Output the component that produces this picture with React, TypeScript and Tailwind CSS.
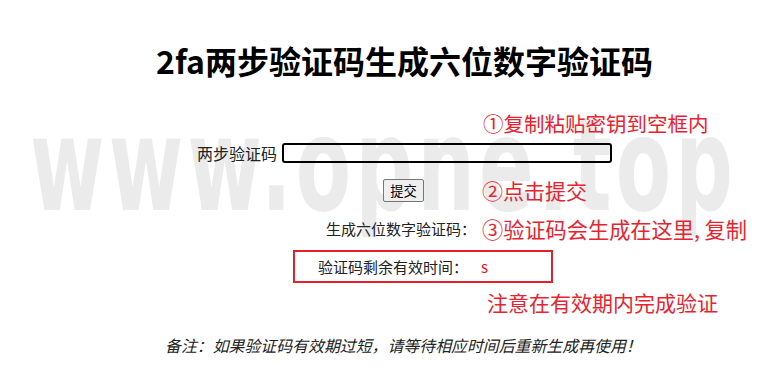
import React from 'react';

const cjk = "font-['Noto_Sans_CJK_SC','Noto_Sans',sans-serif]";

// watermark glyphs are squeezed sideways, then spread out to fill the width
const squeeze = 0.62;

function Watermark() {
  return (
    <svg
      className="pointer-events-none absolute inset-0"
      width="761"
      height="384"
      viewBox="0 0 761 384"
    >
      <text
        x={30 / squeeze}
        y="210"
        transform={`scale(${squeeze} 1)`}
        textLength={703 / squeeze}
        lengthAdjust="spacing"
        fill="#ebebeb"
        fontFamily="'DejaVu Sans', sans-serif"
        fontWeight="bold"
        fontSize="130"
      >
        www.opne.top
      </text>
    </svg>
  );
}

export default function App() {
  return (
    <div className={`relative h-[384px] w-[761px] overflow-hidden bg-white text-[#222] ${cjk}`}>
      <Watermark />
      <div className="relative flex flex-col">
        <h1 className="mt-[40px] h-[40px] pl-[48px] text-center text-[32px] font-bold leading-[40px] text-black">
          2fa两步验证码生成六位数字验证码
        </h1>

        <div className="mt-[29px] h-[28px] pl-[483px] text-[20.5px] leading-[28px] text-[#e8232f]">
          ①复制粘贴密钥到空框内
        </div>

        <div className="mt-[6px] flex h-[20px] items-center pl-[197px]">
          <label className="w-[85px] text-[16px] leading-[20px]">两步验证码</label>
          <input
            type="text"
            className="h-[20px] w-[330px] rounded-[3px] border-2 border-black bg-transparent outline-none"
          />
        </div>

        <div className="mt-[15px] flex h-[24px] items-center pl-[383px]">
          <button className="h-[23px] w-[41px] rounded-[2px] border border-[#767676] bg-[#efefef] text-[13.33px] leading-[19px] text-black">
            提交
          </button>
          <span className="ml-[58px] text-[21px] leading-[28px] text-[#e8232f]">②点击提交</span>
        </div>

        <div className="mt-[13px] flex h-[28px] items-center">
          <span className="w-[476px] text-right text-[15px] leading-[28px]">生成六位数字验证码：</span>
          <span className="ml-[6px] text-[21.2px] leading-[28px] text-[#e8232f]">③验证码会生成在这里, 复制</span>
        </div>

        <div className="ml-[293px] mt-[7px] flex h-[33px] w-[260px] items-center border-2 border-[#e5202b] pl-[23px]">
          <span className="text-[15px] leading-[20px]">验证码剩余有效时间：</span>
          <span className="ml-[13px] text-[15px] leading-[20px] text-[#ee1111]">s</span>
        </div>

        <div className="mt-[4px] h-[30px] pl-[487px] text-[21px] leading-[30px] text-[#e8232f]">
          注意在有效期内完成验证
        </div>

        <p className="mt-[18px] h-[22px] pl-[165px] text-[15.9px] italic leading-[22px] text-[#222]">
          备注：如果验证码有效期过短，请等待相应时间后重新生成再使用！
        </p>
      </div>
    </div>
  );
}
